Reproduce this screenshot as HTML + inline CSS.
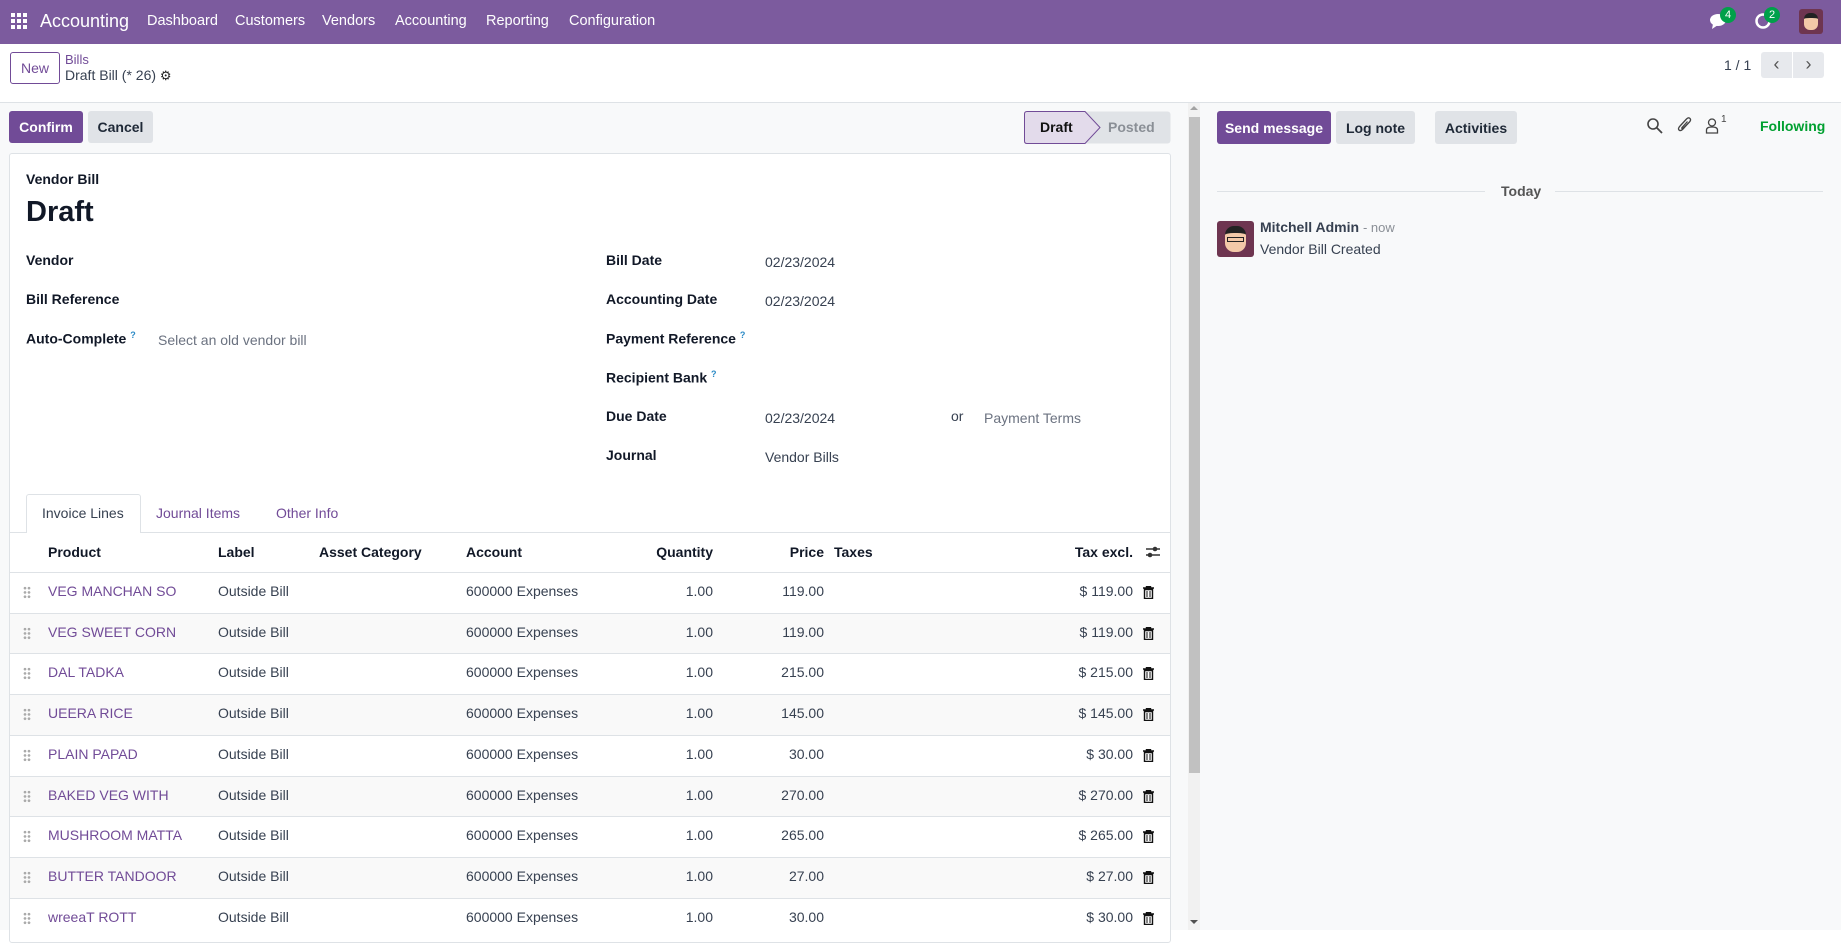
<!DOCTYPE html>
<html><head><meta charset="utf-8"><style>
*{box-sizing:border-box;margin:0;padding:0}
body{width:1841px;height:930px;overflow:hidden;font-family:"Liberation Sans",sans-serif;font-size:14px;color:#374151;background:#fff;position:relative}
.a{position:absolute}
.nav{left:0;top:0;width:1841px;height:44px;background:#7c5b9e;color:#fff}
.nav span{position:absolute;top:13px;font-size:14.5px}
.btn{position:absolute;border-radius:3px;font-weight:bold;font-size:14px;display:flex;align-items:center;justify-content:center}
.lbl{position:absolute;font-weight:bold;color:#111827;font-size:14px}
.val{position:absolute;font-size:14px;color:#374151}
.row{position:absolute;left:10px;width:1160px;height:41px;border-top:1px solid #dee2e6}
.row span{position:absolute;top:10px}
.dots{left:13px;top:13px;width:8px;height:13px;background:radial-gradient(circle,#aaa 1.2px,transparent 1.5px) 0 0/4px 4.3px}
.p{color:#714b97}
</style></head><body>
<div class="a nav">
 <div class="a" style="left:11px;top:13px;width:16px;height:16px;background:linear-gradient(#fff,#fff);-webkit-mask:repeating-linear-gradient(90deg,#000 0 4px,transparent 4px 6px),repeating-linear-gradient(#000 0 4px,transparent 4px 6px);-webkit-mask-composite:source-in;mask-composite:intersect"></div>
 <span style="left:40px;top:11px;font-size:18px">Accounting</span>
 <span style="left:147px">Dashboard</span><span style="left:235px">Customers</span><span style="left:322px">Vendors</span><span style="left:395px">Accounting</span><span style="left:486px">Reporting</span><span style="left:569px">Configuration</span>
 <svg class="a" style="left:1709px;top:12px" width="20" height="18"><ellipse cx="9" cy="8" rx="8" ry="6" fill="#fff"/><path d="M4 12 L3 17 L9 13Z" fill="#fff"/></svg>
 <div class="a" style="left:1720px;top:7px;width:16px;height:16px;border-radius:8px;background:#00a04a;font-size:11px;text-align:center;line-height:16px">4</div>
 <svg class="a" style="left:1754px;top:12px" width="18" height="18"><circle cx="9" cy="9" r="6.5" fill="none" stroke="#fff" stroke-width="2.5"/></svg>
 <div class="a" style="left:1764px;top:7px;width:16px;height:16px;border-radius:8px;background:#00a04a;font-size:11px;text-align:center;line-height:16px">2</div>
 <div class="a" style="left:1799px;top:9px;width:24px;height:25px;border-radius:3px;background:#6e3550"><div class="a" style="left:5px;top:4px;width:14px;height:17px;border-radius:6px;background:#f3c9a8;border-top:5px solid #222"></div></div>
</div>
<div class="btn" style="left:10px;top:52px;width:50px;height:32px;border:1px solid #714b97;color:#714b97;font-weight:normal">New</div>
<div class="a p" style="left:65px;top:52px;font-size:13px">Bills</div>
<div class="a" style="left:65px;top:67px;font-size:14px;color:#374151">Draft Bill (* 26) <span style="font-size:13px;color:#222">&#9881;</span></div>
<div class="a" style="left:1724px;top:57px;font-size:14px">1 / 1</div>
<div class="a" style="left:1761px;top:52px;width:31px;height:26px;background:#e7e9ed;border-radius:3px 0 0 3px;color:#555;font-size:18px;line-height:24px;text-align:center">&lsaquo;</div>
<div class="a" style="left:1793px;top:52px;width:31px;height:26px;background:#e7e9ed;border-radius:0 3px 3px 0;color:#555;font-size:18px;line-height:24px;text-align:center">&rsaquo;</div>
<div class="a" style="left:0;top:102px;width:1841px;height:828px;background:#f8f9fa;border-top:1px solid #dee2e6"></div>
<div class="btn" style="left:9px;top:111px;width:74px;height:32px;background:#714b97;color:#fff">Confirm</div>
<div class="btn" style="left:88px;top:111px;width:65px;height:32px;background:#e0e3e7;color:#1f2937">Cancel</div>
<svg class="a" style="left:1024px;top:111px" width="147" height="33"><rect x="0.5" y="0.5" width="146" height="32" rx="3" fill="#e0e3e7"/><path d="M3 .5 H61 L76 16.5 L61 32.5 H3 Q.5 32.5 .5 30 V3 Q.5 .5 3 .5Z" fill="#e3dbeb" stroke="#714b97"/></svg>
<div class="a" style="left:1040px;top:119px;font-weight:bold;color:#111">Draft</div>
<div class="a" style="left:1108px;top:119px;font-weight:bold;color:#8a8f96">Posted</div>
<div class="a" style="left:9px;top:153px;width:1162px;height:790px;background:#fff;border:1px solid #dee2e6;border-radius:3px"></div>
<div class="lbl" style="left:26px;top:171px">Vendor Bill</div>
<div class="a" style="left:26px;top:196px;font-size:29px;font-weight:bold;color:#111827">Draft</div>
<div class="lbl" style="left:26px;top:252px">Vendor</div>
<div class="lbl" style="left:26px;top:291px">Bill Reference</div>
<div class="lbl" style="left:26px;top:330px">Auto-Complete <sup style="color:#2b8ac6;font-size:9px">?</sup></div>
<div class="val" style="left:158px;top:332px;color:#6b7280">Select an old vendor bill</div>
<div class="lbl" style="left:606px;top:252px">Bill Date</div><div class="val" style="left:765px;top:254px">02/23/2024</div>
<div class="lbl" style="left:606px;top:291px">Accounting Date</div><div class="val" style="left:765px;top:293px">02/23/2024</div>
<div class="lbl" style="left:606px;top:330px">Payment Reference <sup style="color:#2b8ac6;font-size:9px">?</sup></div>
<div class="lbl" style="left:606px;top:369px">Recipient Bank <sup style="color:#2b8ac6;font-size:9px">?</sup></div>
<div class="lbl" style="left:606px;top:408px">Due Date</div><div class="val" style="left:765px;top:410px">02/23/2024</div>
<div class="val" style="left:951px;top:408px">or</div><div class="val" style="left:984px;top:410px;color:#6b7280">Payment Terms</div>
<div class="lbl" style="left:606px;top:447px">Journal</div><div class="val" style="left:765px;top:449px">Vendor Bills</div>
<div class="a" style="left:10px;top:532px;width:1160px;border-top:1px solid #dee2e6"></div>
<div class="a" style="left:26px;top:494px;width:115px;height:39px;background:#fff;border:1px solid #dee2e6;border-bottom:none;border-radius:3px 3px 0 0"></div>
<div class="a" style="left:42px;top:505px">Invoice Lines</div>
<div class="a p" style="left:156px;top:505px">Journal Items</div>
<div class="a p" style="left:276px;top:505px">Other Info</div>
<div class="a" style="left:10px;top:533px;width:1160px;height:40px;font-weight:bold;color:#111827">
 <span class="a" style="left:38px;top:11px">Product</span><span class="a" style="left:208px;top:11px">Label</span><span class="a" style="left:309px;top:11px">Asset Category</span><span class="a" style="left:456px;top:11px">Account</span><span class="a" style="right:457px;top:11px">Quantity</span><span class="a" style="right:346px;top:11px">Price</span><span class="a" style="left:824px;top:11px">Taxes</span><span class="a" style="right:37px;top:11px">Tax excl.</span>
 <svg class="a" style="left:1135px;top:12px" width="16" height="14"><path d="M1 4H15M1 10H15" stroke="#333" stroke-width="1.5"/><circle cx="10" cy="4" r="2.3" fill="#333"/><circle cx="5" cy="10" r="2.3" fill="#333"/></svg>
</div>
<div id="rows"></div>
<script>
var d=[["VEG MANCHAN SO","119.00"],["VEG SWEET CORN","119.00"],["DAL TADKA","215.00"],["UEERA RICE","145.00"],["PLAIN PAPAD","30.00"],["BAKED VEG WITH","270.00"],["MUSHROOM MATTA","265.00"],["BUTTER TANDOOR","27.00"],["wreeaT ROTT","30.00"]];
var h="";d.forEach(function(r,i){var t=572+i*40.7;h+='<div class="row" style="top:'+t+'px;background:'+(i%2?'#f9f9f9':'#fff')+'"><div class="a dots"></div><span class="p" style="left:38px">'+r[0]+'</span><span style="left:208px">Outside Bill</span><span style="left:456px">600000 Expenses</span><span style="right:457px">1.00</span><span style="right:346px">'+r[1]+'</span><span style="right:37px">$ '+r[1]+'</span><svg class="a" style="left:1133px;top:13px" width="11" height="13"><path d="M0 2H11M3.5 2V0.5H7.5V2M1.5 3.5H9.5V12.5H1.5Z" fill="none" stroke="#111" stroke-width="1.4"/><path d="M4 5V11M7 5V11" stroke="#111"/></svg></div>';});
document.getElementById("rows").innerHTML=h;
</script>
<div class="a" style="left:1188px;top:103px;width:12px;height:827px;background:#f1f1f1"></div>
<div class="a" style="left:1189px;top:117px;width:11px;height:656px;background:#c1c1c1"></div>
<div class="a" style="left:1190px;top:106px;width:0;height:0;border:4px solid transparent;border-bottom-color:#a3a3a3;border-top:0"></div>
<div class="a" style="left:1190px;top:920px;width:0;height:0;border:4px solid transparent;border-top-color:#505050;border-bottom:0"></div>
<div class="btn" style="left:1217px;top:111px;width:114px;height:33px;background:#714b97;color:#fff">Send message</div>
<div class="btn" style="left:1336px;top:111px;width:79px;height:33px;background:#e0e3e7;color:#1f2937">Log note</div>
<div class="btn" style="left:1435px;top:111px;width:82px;height:33px;background:#e0e3e7;color:#1f2937">Activities</div>
<svg class="a" style="left:1646px;top:117px" width="18" height="18"><circle cx="7" cy="7" r="5" fill="none" stroke="#444" stroke-width="1.6"/><path d="M11 11L16 16" stroke="#444" stroke-width="1.8"/></svg>
<svg class="a" style="left:1676px;top:115px" width="18" height="20"><path d="M12.5 8L7 14Q4.5 16.5 3 15T4.5 10.5L10.5 4Q12.5 2 14 3.5T13 7.5L7.5 13Q6.5 14 6 13.5T6.5 12L11.5 6.5" fill="none" stroke="#444" stroke-width="1.3"/></svg>
<svg class="a" style="left:1705px;top:117px" width="14" height="18"><circle cx="7" cy="5.5" r="3.5" fill="none" stroke="#444" stroke-width="1.3"/><path d="M1.5 16V13Q1.5 10 7 10T12.5 13V16Z" fill="none" stroke="#444" stroke-width="1.3"/></svg>
<div class="a" style="left:1721px;top:114px;font-size:10px;color:#444">1</div>
<div class="a" style="left:1760px;top:118px;font-weight:bold;color:#00a030">Following</div>
<div class="a" style="left:1217px;top:191px;width:268px;border-top:1px solid #dee2e6"></div>
<div class="a" style="left:1555px;top:191px;width:268px;border-top:1px solid #dee2e6"></div>
<div class="a" style="left:1501px;top:183px;font-weight:bold;color:#555">Today</div>
<div class="a" style="left:1217px;top:221px;width:37px;height:36px;border-radius:3px;background:#6e3550"><div class="a" style="left:8px;top:5px;width:21px;height:26px;border-radius:9px;background:#f3c9a8;border-top:7px solid #222"></div><div class="a" style="left:10px;top:16px;width:17px;height:5px;border:1.5px solid #222"></div></div>
<div class="a" style="left:1260px;top:219px;font-weight:bold;color:#374151">Mitchell Admin <span style="font-weight:normal;color:#8a8f96;font-size:13px">- now</span></div>
<div class="a" style="left:1260px;top:241px">Vendor Bill Created</div>
</body></html>
